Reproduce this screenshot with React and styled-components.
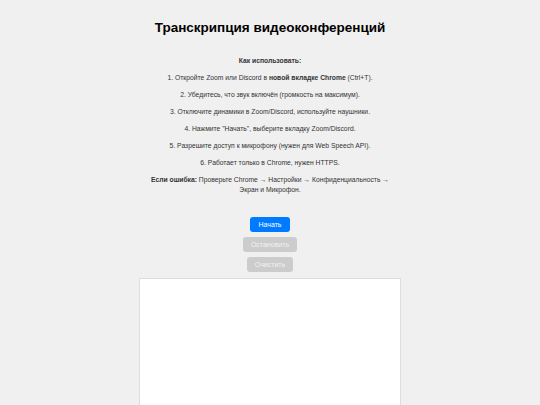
import styled, { createGlobalStyle } from "styled-components"

const GlobalStyle = createGlobalStyle`
  html, body {
    margin: 0;
    padding: 0;
    background-color: #f0f0f0;
    font-family: "Liberation Sans", Arial, sans-serif;
  }
`

const Page = styled.main`
  width: 262px;
  margin: 0 auto;
  padding-top: 20px;
`

const Title = styled.h1`
  font-size: 13.5px;
  line-height: 16px;
  font-weight: 700;
  color: #000;
  text-align: center;
  margin: 0 0 20px;
`

const Instructions = styled.div`
  padding: 0 8px;
  text-align: center;
  color: #333;
  font-size: 6.75px;
  line-height: 10px;
`

const Line = styled.p`
  margin: 0 0 7px;
`

const Controls = styled.div`
  display: flex;
  flex-direction: column;
  align-items: center;
  gap: 5px;
  margin-top: 22px;
`

const Button = styled.button`
  font-family: inherit;
  font-size: 7px;
  line-height: 9px;
  padding: 3px 8px;
  border: none;
  border-radius: 3px;
  color: ${(p) => (p.$primary ? "#fff" : "#f2f2f2")};
  background-color: ${(p) => (p.$primary ? "#007bff" : "#cccccc")};
  cursor: ${(p) => (p.disabled ? "default" : "pointer")};
`

const Transcript = styled.div`
  margin-top: 6px;
  height: 200px;
  background-color: #fff;
  border: 1px solid #dddddd;
`

const steps = [
  <>1. Откройте Zoom или Discord в <b>новой вкладке Chrome</b> (Ctrl+T).</>,
  "2. Убедитесь, что звук включён (громкость на максимум).",
  "3. Отключите динамики в Zoom/Discord, используйте наушники.",
  '4. Нажмите "Начать", выберите вкладку Zoom/Discord.',
  "5. Разрешите доступ к микрофону (нужен для Web Speech API).",
  "6. Работает только в Chrome, нужен HTTPS.",
]

export default function App() {
  return (
    <>
      <GlobalStyle />
      <Page>
        <Title>Транскрипция видеоконференций</Title>
        <Instructions>
          <Line><b>Как использовать:</b></Line>
          {steps.map((step, i) => (
            <Line key={i}>{step}</Line>
          ))}
          <Line>
            <b>Если ошибка:</b> Проверьте Chrome → Настройки → Конфиденциальность → Экран и Микрофон.
          </Line>
        </Instructions>
        <Controls>
          <Button $primary>Начать</Button>
          <Button disabled>Остановить</Button>
          <Button disabled>Очистить</Button>
        </Controls>
        <Transcript />
      </Page>
    </>
  )
}
